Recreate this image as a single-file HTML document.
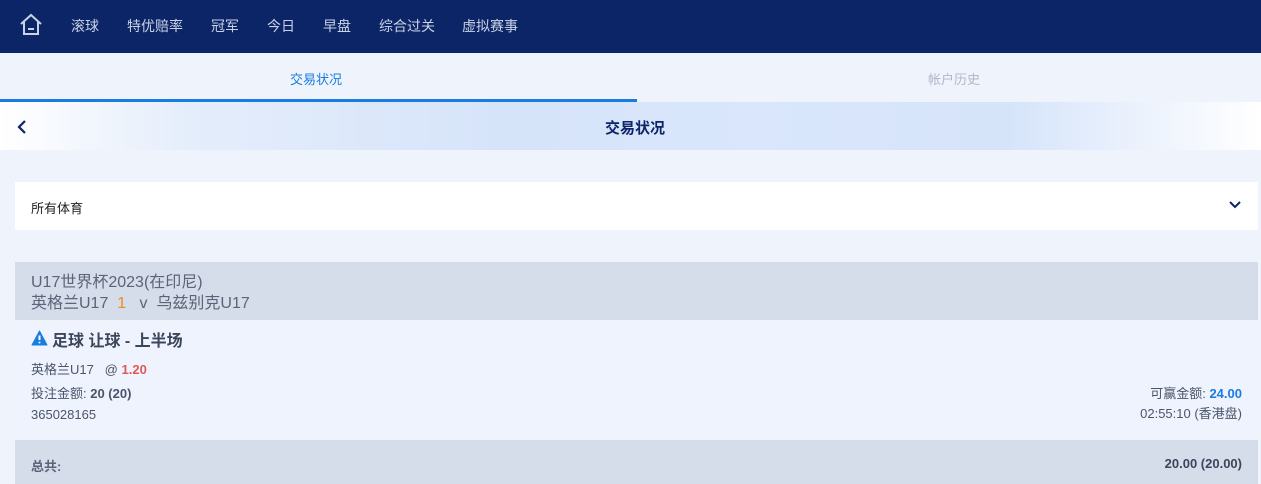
<!DOCTYPE html>
<html><head><meta charset="utf-8"><style>
*{margin:0;padding:0;box-sizing:border-box}
body{width:1261px;height:484px;overflow:hidden;background:#eef3fc;font-family:"Liberation Sans","Noto Sans CJK SC",sans-serif;color:#4b556a;position:relative}
.nav{position:absolute;left:0;top:0;width:1261px;height:53px;background:#0c2566;box-shadow:0 2px 4px rgba(0,0,0,.35)}
.nav span{position:absolute;top:16px;font-size:14px;color:#c9d2e6}
.tabs{position:absolute;top:53px;left:0;width:1261px;height:49px;background:#eef3fc}
.tab{position:absolute;top:16px;font-size:13px}
.ul{position:absolute;left:0;top:99px;width:637px;height:3px;background:#1a7ce0}
.banner{position:absolute;top:102px;left:0;width:1261px;height:48px;background:linear-gradient(90deg,#fff 0%,#e4edfb 15%,#d6e4fa 40%,#d9e6fb 60%,#d6e4fa 80%,#fff 100%)}
.box{position:absolute;left:15px;width:1243px}
</style></head><body>
<div class="nav">
<svg style="position:absolute;left:19px;top:13px" width="24" height="24" viewBox="0 0 24 24" fill="none" stroke="#c9d2e6" stroke-width="2"><path d="M2 11L12 2L22 11M5 9V21H19V9"/><path d="M9 16H15"/></svg>
<span style="left:71px">滚球</span><span style="left:127px">特优赔率</span><span style="left:211px">冠军</span><span style="left:267px">今日</span><span style="left:323px">早盘</span><span style="left:379px">综合过关</span><span style="left:462px">虚拟赛事</span>
</div>
<div class="tabs"><div class="tab" style="left:290px;color:#1a7ce0">交易状况</div><div class="tab" style="left:928px;color:#b0b8c8">帐户历史</div></div>
<div class="ul"></div>
<div class="banner">
<svg style="position:absolute;left:16px;top:17px" width="12" height="16" viewBox="0 0 12 16"><path d="M9 2L3 8L9 14" fill="none" stroke="#0c2566" stroke-width="2.2"/></svg>
<div style="position:absolute;left:605px;top:15px;font-size:15px;font-weight:bold;color:#0c2566">交易状况</div>
</div>
<div class="box" style="top:182px;height:48px;background:#fff">
<div style="position:absolute;left:16px;top:16px;font-size:13px;color:#222">所有体育</div>
<svg style="position:absolute;right:17px;top:19px" width="12" height="8" viewBox="0 0 12 8"><path d="M1 1L6 6L11 1" fill="none" stroke="#0c2566" stroke-width="2"/></svg>
</div>
<div class="box" style="top:262px;height:58px;background:#d5dcea;font-size:16px;color:#5b6478">
<div style="position:absolute;left:16px;top:11px;line-height:20px">U17世界杯2023(在印尼)</div>
<div style="position:absolute;left:16px;top:32px;line-height:20px">英格兰U17 &nbsp;<span style="color:#f08a24">1</span> &nbsp; v &nbsp;乌兹别克U17</div>
</div>
<div class="box" style="top:320px;height:120px;background:#eef3fd;font-size:13px">
<svg style="position:absolute;left:16px;top:10px" width="17" height="16" viewBox="0 0 17 16"><path d="M8.5 1L16 15H1Z" fill="#1a7ce0" stroke="#1a7ce0" stroke-linejoin="round"/><path d="M8.5 5.5V10" stroke="#fff" stroke-width="2"/><circle cx="8.5" cy="12.5" r="1" fill="#fff"/></svg>
<div style="position:absolute;left:37px;top:7px;font-size:16px;font-weight:bold;color:#3c465a">足球 让球 - 上半场</div>
<div style="position:absolute;left:16px;top:39px">英格兰U17 &nbsp; @ <b style="color:#e05a55">1.20</b></div>
<div style="position:absolute;left:16px;top:63px">投注金额: <b>20 (20)</b></div>
<div style="position:absolute;left:16px;top:87px">365028165</div>
<div style="position:absolute;right:16px;top:63px">可赢金额: <b style="color:#1a7ce0">24.00</b></div>
<div style="position:absolute;right:16px;top:86px;line-height:16px">02:55:10 (香港盘)</div>
</div>
<div class="box" style="top:440px;height:44px;background:#d5dcea;font-size:13px">
<div style="position:absolute;left:16px;top:16px;font-weight:bold;color:#5b6478">总共:</div>
<div style="position:absolute;right:16px;top:16px;font-weight:bold;color:#3c465a">20.00 (20.00)</div>
</div>
</body></html>
